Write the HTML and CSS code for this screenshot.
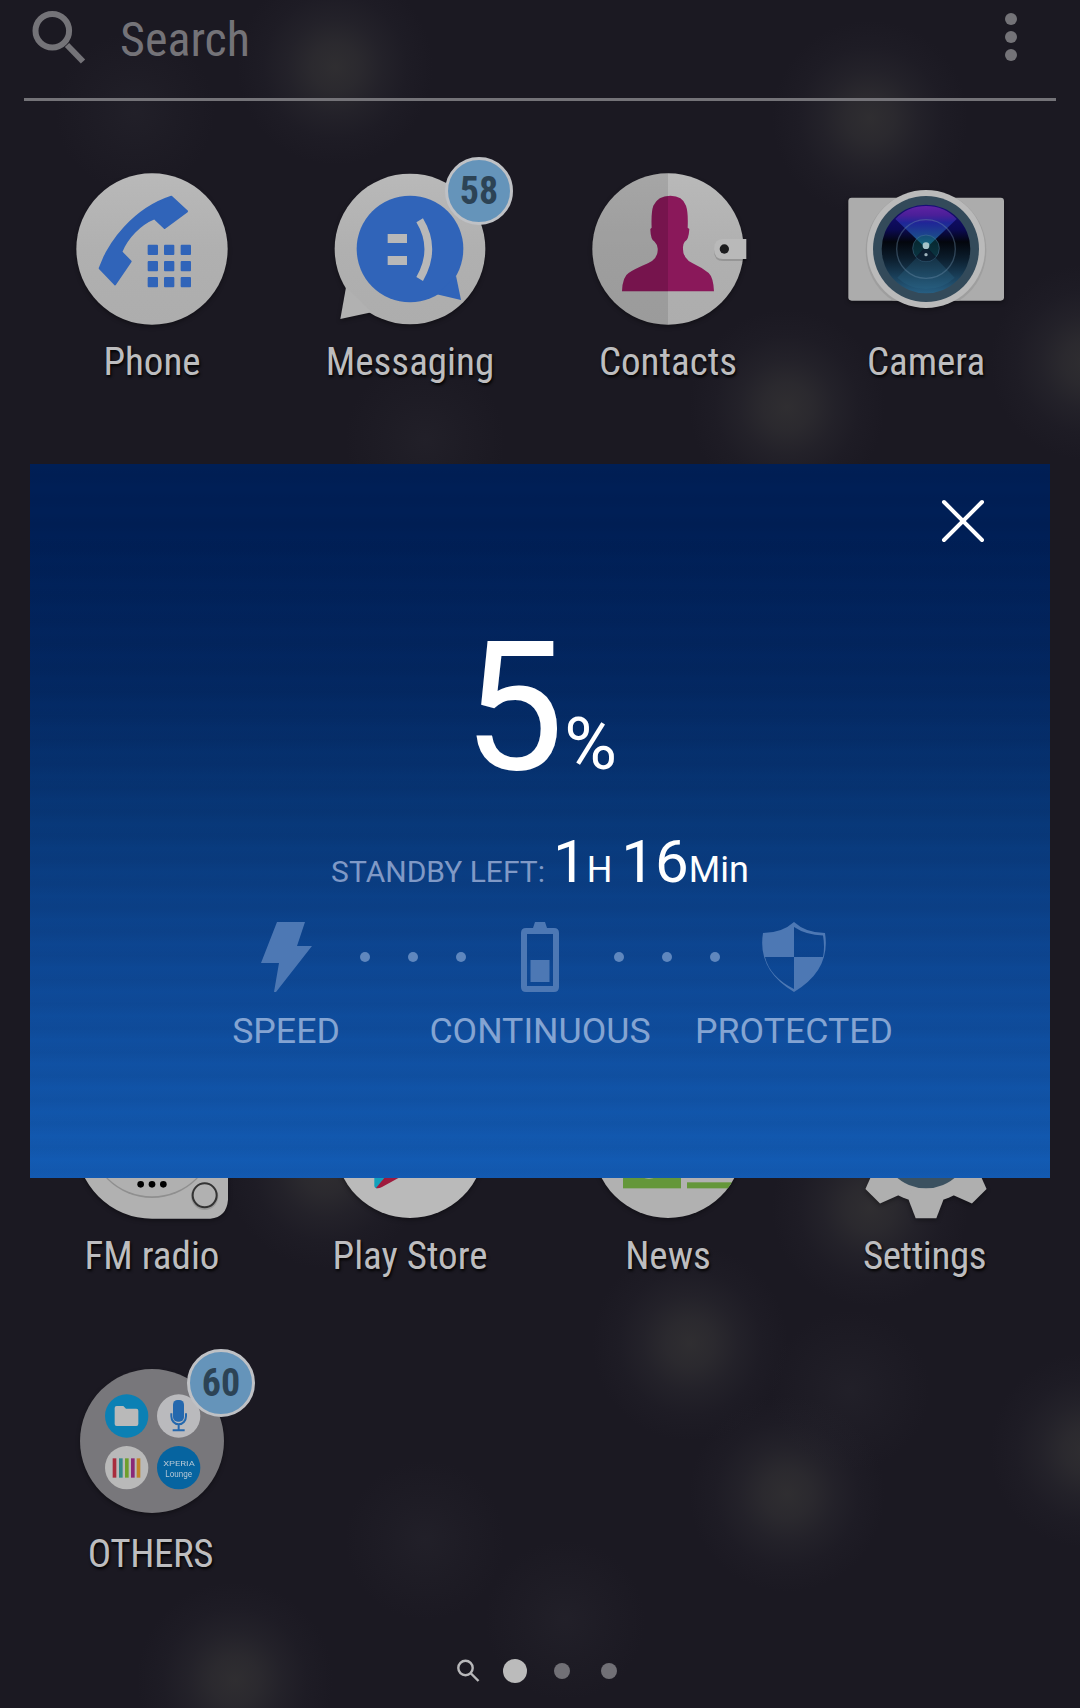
FILE: index.html
```html
<!DOCTYPE html>
<html lang="en">
<head>
    <meta charset="UTF-8">
    <meta name="viewport" content="width=device-width, initial-scale=1.0">
    <title>Home</title>
    <link rel="stylesheet" href="styles.css">
</head>
<body>

<div class="screen">
    <header class="search-bar">
        <svg class="search-icon" viewBox="0 0 60 60">
            <circle cx="22.3" cy="22.7" r="16.8"/>
            <path d="M37 37 L53 53.5"/>
        </svg>
        <span class="search-text">Search</span>
        <div class="menu"><i></i><i></i><i></i></div>
    </header>

    <main class="apps">
        <div class="app">
            <div class="icon">
                <svg viewBox="0 0 480 480">
                    <circle cx="240" cy="240" r="227" fill="url(#plate)"/>
                    <g fill="#3064b9">
                        <path d="M298 83 L345 127 L278 177 L247 148 C205 165 165 205 148 249 L176 277 L129 346 L83 298 C110 220 185 120 298 83Z" stroke="#3064b9" stroke-width="6" stroke-linejoin="round"/>
                        <rect x="227" y="227" width="31" height="31" rx="3"/><rect x="276" y="227" width="31" height="31" rx="3"/><rect x="326" y="227" width="31" height="31" rx="3"/>
                        <rect x="227" y="276" width="31" height="31" rx="3"/><rect x="276" y="276" width="31" height="31" rx="3"/><rect x="326" y="276" width="31" height="31" rx="3"/>
                        <rect x="227" y="324" width="31" height="31" rx="3"/><rect x="276" y="324" width="31" height="31" rx="3"/><rect x="326" y="324" width="31" height="31" rx="3"/>
                    </g>
                </svg>
            </div>
            <span class="label">Phone</span>
        </div>
        <div class="app">
            <div class="icon">
                <svg viewBox="0 0 480 480">
                    <circle cx="240" cy="240" r="226" fill="url(#plate)"/>
                    <path d="M48 355 L31 450 L125 430Z" fill="#b1b1b1"/>
                    <circle cx="240" cy="240" r="160" fill="#3064b9"/>
                    <path d="M378 320 L393 393 L320 376Z" fill="#3064b9"/>
                    <path d="M173 195h58v27h-58zM173 261h58v27h-58z" fill="#b8b8b8"/>
                    <path d="M269 154 Q321 240 269 330" fill="none" stroke="#b8b8b8" stroke-width="23"/>
                </svg>
                <span class="badge">58</span>
            </div>
            <span class="label">Messaging</span>
        </div>
        <div class="app">
            <div class="icon">
                <svg viewBox="0 0 480 480">
                    <circle cx="240" cy="240" r="227" fill="url(#plate)"/>
                    <path d="M240 13 A227 227 0 0 0 240 467Z" fill="#000" opacity=".1"/>
                    <path d="M102 367 Q104 322 122 312 Q140 300 180 283 Q212 268 209 238 Q208 226 200 218 Q188 214 187 180 L191 176 Q189 130 196 110 Q210 80 247 80 Q284 80 294 110 Q301 130 299 176 L304 180 Q302 214 290 218 Q284 226 285 238 Q284 268 314 283 Q340 295 362 312 Q376 325 378 367 Z" fill="#8a185a"/>
                    <path d="M102 367 Q104 322 122 312 Q140 300 180 283 Q212 268 209 238 Q208 226 200 218 Q188 214 187 180 L191 176 Q189 130 196 110 Q208 82 240 80 V367Z" fill="#000" opacity=".14"/>
                    <path d="M475 214 H405 Q378 214 378 245 Q378 276 405 276 H475Z" fill="#000" opacity=".15"/>
                    <path d="M475 210 H405 Q378 210 378 240 Q378 270 405 270 H475Z" fill="#b9b9b9"/>
                    <circle cx="409" cy="240" r="14" fill="#1c1c1e"/>
                </svg>
            </div>
            <span class="label">Contacts</span>
        </div>
        <div class="app">
            <div class="icon">
                <svg viewBox="0 0 480 480">
                    <rect x="7" y="86" width="467" height="309" rx="10" fill="#acacac"/>
                    <circle cx="240" cy="244" r="181" fill="#999" opacity=".7" clip-path="url(#cameraBody)"/>
                    <circle cx="240" cy="240" r="177" fill="#bababa"/>
                    <circle cx="240" cy="240" r="159" fill="#334a5a"/>
                    <circle cx="240" cy="240" r="133" fill="url(#lens)"/>
                    <path d="M240 236 L154 326 A125 125 0 0 0 326 326Z" fill="#2f6a8c" opacity=".28"/>
                    <path d="M240 238 L148 150 Q185 111 240 111 Q295 111 332 150Z" fill="url(#flare)"/>
                    <circle cx="240" cy="240" r="88" fill="none" stroke="#6b8ba8" stroke-opacity=".4" stroke-width="4"/>
                    <circle cx="240" cy="238" r="40" fill="#0d5560" fill-opacity=".45" stroke="#5a7fa5" stroke-opacity=".4" stroke-width="3"/>
                    <path d="M240 232 L270 264 A40 40 0 0 1 210 264Z" fill="#0a0c20" opacity=".6"/>
                    <circle cx="240" cy="230" r="10" fill="#a5c4c8"/>
                    <circle cx="240" cy="257" r="5" fill="#9fb4bc"/>
                </svg>
            </div>
            <span class="label">Camera</span>
        </div>

        <div class="app fourth-row">
            <div class="icon">
                <svg viewBox="0 0 480 480">
                    <path d="M240 13 H468 V410 Q464 462 415 467 H240 A227 227 0 0 1 240 13Z" fill="#b1b1b1"/>
                    <circle cx="240" cy="216" r="189" fill="#8f8f8f"/>
                    <circle cx="240" cy="212" r="188" fill="#b0b0b0"/>
                    <circle cx="206" cy="364" r="10"/><circle cx="240" cy="364" r="10"/><circle cx="274" cy="364" r="10"/>
                    <circle cx="398" cy="400" r="37" fill="none" stroke="#999" stroke-width="8"/>
                    <circle cx="398" cy="397" r="36" fill="#b1b1b1" stroke="#333" stroke-width="6"/>
                </svg>
            </div>
            <span class="label">FM radio</span>
        </div>
        <div class="app fourth-row">
            <div class="icon">
                <svg viewBox="0 0 480 480">
                    <circle cx="240" cy="240" r="225" fill="#bababa"/>
                    <path d="M133 110 V368 Q134 376 142 376 L250 240Z" fill="#12a0bb"/>
                    <path d="M138 375 Q146 377 156 372 L260 315 L200 300Z" fill="#9e1a3d"/>
                </svg>
            </div>
            <span class="label">Play Store</span>
        </div>
        <div class="app fourth-row">
            <div class="icon">
                <svg viewBox="0 0 480 480">
                    <circle cx="240" cy="240" r="225" fill="#b1b1b1"/>
                    <g fill="#64973a" clip-path="url(#disc)">
                        <rect x="105" y="200" width="174" height="176"/>
                        <rect x="297" y="358" width="170" height="18"/>
                    </g>
                    <circle cx="183" cy="290" r="57" fill="#b1b1b1"/>
                </svg>
            </div>
            <span class="label">News</span>
        </div>
        <div class="app fourth-row">
            <div class="icon">
                <svg viewBox="0 0 480 480">
                    <g fill="#afafaf">
                        <circle cx="240" cy="240" r="178"/>
                        <path id="tooth" d="M188 411 L209 466 H271 L292 411 L240 240Z"/>
                        <use href="#tooth" transform="rotate(45 240 240)"/>
                        <use href="#tooth" transform="rotate(90 240 240)"/>
                        <use href="#tooth" transform="rotate(135 240 240)"/>
                        <use href="#tooth" transform="rotate(180 240 240)"/>
                        <use href="#tooth" transform="rotate(225 240 240)"/>
                        <use href="#tooth" transform="rotate(270 240 240)"/>
                        <use href="#tooth" transform="rotate(315 240 240)"/>
                    </g>
                    <circle cx="240" cy="242" r="134" fill="#3b5160"/>
                </svg>
            </div>
            <span class="label tight">Settings</span>
        </div>

        <div class="app fifth-row">
            <div class="icon">
                <svg viewBox="0 0 480 480">
                    <circle cx="240" cy="240" r="216" fill="#78777b"/>
                    <!-- files -->
                    <circle cx="164" cy="165" r="65" fill="#0b80b4"/>
                    <path d="M128 141 Q128 135 134 135 H154 L162 143 H193 Q199 143 199 149 V189 Q199 195 193 195 H134 Q128 195 128 189Z" fill="#b9b9b9"/>
                    <!-- recorder -->
                    <circle cx="320" cy="165" r="65" fill="#bababd"/>
                    <rect x="303" y="117" width="33" height="65" rx="14" fill="#2468ae"/>
                    <path d="M298 157 V166 A22 24 0 0 0 342 166 V157 M320 190 V208 M302 208 H338" fill="none" stroke="#2468ae" stroke-width="6"/>
                    <!-- sketch -->
                    <circle cx="164" cy="320" r="65" fill="#b9b9b9"/>
                    <path d="M122 292h11v58h-11z" fill="#a82c3c"/>
                    <path d="M141 292h11v58h-11z" fill="#328889"/>
                    <path d="M159 292h11v58h-11z" fill="#6f9e2c"/>
                    <path d="M177 292h11v58h-11z" fill="#8a2877"/>
                    <path d="M194 292h11v58h-11z" fill="#c18328"/>
                    <!-- lounge -->
                    <circle cx="320" cy="320" r="65" fill="#0664a0"/>
                    <text x="321" y="316" class="mini" font-size="22" textLength="95" lengthAdjust="spacingAndGlyphs">XPERIA</text>
                    <text x="320" y="347" class="mini" font-size="25" textLength="80" lengthAdjust="spacingAndGlyphs">Lounge</text>
                </svg>
                <span class="badge">60</span>
            </div>
            <span class="label tight">OTHERS</span>
        </div>
    </main>

    <footer class="pages">
        <svg viewBox="0 0 24 24"><circle cx="9.5" cy="9" r="7.2"/><path d="M15 14.5 L22.5 22"/></svg>
        <i class="current"></i>
        <i></i>
        <i></i>
    </footer>

    <section class="dialog">
        <svg class="close" viewBox="0 0 44 44"><path d="M3 3 L41 41 M41 3 L3 41"/></svg>
        <div class="percent">5<small>%</small></div>
        <div class="standby">
            <span class="standby-label">STANDBY LEFT:</span>
            <span class="num">1</span><span class="unit hour">H</span>
            <span class="num">16</span><span class="unit">Min</span>
        </div>
        <div class="stages">
            <svg viewBox="0 0 64 70"><path d="M23 0 H51 L43 24 H58 L22 70 H20 L25 41 H7Z"/></svg>
            <div class="dots"><i></i><i></i><i></i></div>
            <svg viewBox="0 0 64 70"><path fill-rule="evenodd" d="M25 6 L27 0 H37 L39 6 H46 Q51 6 51 11 V65 Q51 70 46 70 H18 Q13 70 13 65 V11 Q13 6 18 6Z M19 12 V64 H45 V12Z"/><rect x="22.500" y="38" width="19" height="22"/></svg>
            <div class="dots"><i></i><i></i><i></i></div>
            <svg viewBox="0 0 64 70"><path fill-rule="evenodd" d="M32 0 Q44 11 63 11 Q69 48 32 70 Q-5 48 1 11 Q20 11 32 0Z M32 5 V35 H61 Q63 25 61 13.500 Q44 13 32 5Z M32 35 H3 Q8 55 32 67Z"/></svg>
        </div>
        <div class="stage-names">
            <span>SPEED</span>
            <span>CONTINUOUS</span>
            <span>PROTECTED</span>
        </div>
    </section>
</div>

<svg class="defs">
    <defs>
        <linearGradient id="plate" x1="0" y1="0" x2="0" y2="1">
            <stop offset="0" stop-color="#b9b9b9"/>
            <stop offset=".5" stop-color="#b0b0b0"/>
            <stop offset="1" stop-color="#adadad"/>
        </linearGradient>
        <linearGradient id="lens" x1="0" y1="0" x2="0" y2="1">
            <stop offset="0" stop-color="#170f78"/>
            <stop offset=".28" stop-color="#0b0a52"/>
            <stop offset=".42" stop-color="#03060d"/>
            <stop offset=".6" stop-color="#0b1c2b"/>
            <stop offset="1" stop-color="#275f83"/>
        </linearGradient>
        <linearGradient id="flare" x1="0" y1="0" x2="0" y2="1">
            <stop offset="0" stop-color="#6023a4"/>
            <stop offset=".22" stop-color="#4a1f98"/>
            <stop offset=".4" stop-color="#1f2697"/>
            <stop offset=".7" stop-color="#1c478c"/>
            <stop offset="1" stop-color="#1a8390"/>
        </linearGradient>
        <clipPath id="cameraBody"><rect x="7" y="86" width="467" height="309" rx="10"/></clipPath>
        <clipPath id="disc"><circle cx="240" cy="240" r="225"/></clipPath>
    </defs>
</svg>

</body>
</html>
```
FILE: styles.css
```css
body {
    margin: 0;
    background-color: #1b1922;
    font-family: Roboto, sans-serif;
}

.screen {
    --glow: rgba(62, 61, 60, 0.58) 0, rgba(60, 59, 60, 0.48) 24px, rgba(56, 55, 60, 0.28) 48px, rgba(54, 53, 62, 0.1) 72px, transparent 98px;
    --faint: rgba(56, 55, 64, 0.22) 0, rgba(56, 55, 64, 0.1) 40px, transparent 80px;
    position: relative;
    display: flex;
    flex-direction: column;
    width: 1080px;
    height: 1708px;
    overflow: hidden;
    background:
        radial-gradient(circle at 335px 67px, var(--glow)),
        radial-gradient(circle at 870px 118px, var(--glow)),
        radial-gradient(circle at 787px 407px, var(--glow)),
        radial-gradient(circle at 1088px 362px, var(--glow)),
        radial-gradient(circle at 690px 1343px, var(--glow)),
        radial-gradient(circle at 787px 1494px, var(--glow)),
        radial-gradient(circle at 1088px 1450px, var(--glow)),
        radial-gradient(circle at 235px 1680px, var(--glow)),
        radial-gradient(circle at 870px 1208px, var(--glow)),
        radial-gradient(circle at 325px 1170px, var(--glow)),
        radial-gradient(circle at 135px 112px, var(--faint)),
        radial-gradient(circle at 425px 1540px, var(--faint)),
        radial-gradient(circle at 425px 440px, var(--faint)),
        radial-gradient(circle at 850px 1390px, var(--faint)),
        radial-gradient(circle at 565px 1620px, var(--faint)),
        #1b1922;
}

.search-bar {
    box-sizing: border-box;
    display: flex;
    align-items: flex-start;
    height: 101px;
    margin: 0 24px;
    padding: 8px 39px 0 6px;
    border-bottom: 3px solid #747378;
}

.search-icon {
    width: 60px;
    height: 60px;
    fill: none;
    stroke: #747378;
    stroke-width: 6;
}

.search-text {
    flex: 1;
    margin-left: 30px;
    padding-top: 4px;
    font-size: 48px;
    line-height: 56px;
    font-family: "Roboto Condensed", Roboto, sans-serif;
    font-stretch: 75%;
    color: #747378;
}

.menu {
    display: flex;
    flex-direction: column;
    gap: 6px;
    padding-top: 5px;
}

.menu i {
    width: 12px;
    height: 12px;
    border-radius: 50%;
    background: #747378;
}

.apps {
    flex: none;
    display: grid;
    grid-template-columns: repeat(4, 258px);
    grid-template-rows: repeat(5, 298px);
    margin-left: 23px;
}

.app {
    display: flex;
    flex-direction: column;
    align-items: center;
    padding-top: 67.5px;
}

.fourth-row {
    grid-row: 4;
}

.fifth-row {
    grid-row: 5;
}

.icon {
    position: relative;
    width: 160px;
    height: 160px;
}

.icon svg {
    display: block;
    width: 160px;
    height: 160px;
    filter: drop-shadow(0 2px 2px rgba(0, 0, 0, 0.35));
}

.label {
    margin-top: 10px;
    font-family: "Roboto Condensed", Roboto, sans-serif;
    font-stretch: 75%;
    font-size: 39px;
    line-height: 46px;
    white-space: nowrap;
    color: #bdbdbf;
    text-shadow: 1px 2px 3px #000;
}

.tight {
    letter-spacing: -0.4px;
    margin-left: -3px;
}

.badge {
    box-sizing: border-box;
    position: absolute;
    left: 115px;
    top: -12px;
    width: 68px;
    height: 68px;
    border: 3px solid #bfc1c5;
    border-radius: 50%;
    background: #6594ba;
    font-family: "Roboto Condensed", Roboto, sans-serif;
    font-stretch: 75%;
    font-size: 38px;
    font-weight: bold;
    line-height: 62px;
    text-align: center;
    color: #2c4355;
}

.mini {
    fill: #b4c6d4;
    text-anchor: middle;
}

.pages {
    display: flex;
    align-items: center;
    justify-content: center;
    height: 24px;
    margin-top: 68px;
    padding-right: 8px;
}

.pages svg {
    width: 24px;
    height: 24px;
    margin-right: 23px;
    fill: none;
    stroke: #b8b8ba;
    stroke-width: 2.4;
}

.pages i {
    width: 16px;
    height: 16px;
    margin-left: 31px;
    border-radius: 50%;
    background: #717076;
}

.pages .current {
    width: 24px;
    height: 24px;
    margin: 0 -4px 0 0;
    background: #bbbbbb;
}

.dialog {
    position: absolute;
    left: 30px;
    top: 464px;
    display: flex;
    flex-direction: column;
    align-items: center;
    width: 1020px;
    height: 714px;
    background:
        repeating-linear-gradient(rgba(0, 0, 20, 0) 0, rgba(0, 0, 20, 0.04) 12px, rgba(0, 0, 20, 0) 24px),
        linear-gradient(#001f56 0, #001f56 10%, #032761 30%, #083879 50%, #0d4794 70%, #135cb5 100%);
    color: #fff;
}

.close {
    align-self: flex-end;
    width: 44px;
    height: 44px;
    margin: 35px 65px 0 0;
    fill: none;
    stroke: #fff;
    stroke-width: 4;
    stroke-linecap: round;
}

.percent {
    margin-top: 60px;
    font-size: 180px;
    line-height: 210px;
}

.percent small {
    font-size: 72px;
}

.standby {
    display: flex;
    align-items: baseline;
    margin-top: -23px;
    line-height: 70px;
}

.standby-label {
    margin-right: 8px;
    font-size: 30px;
    color: #8099c6;
}

.num {
    font-size: 60px;
}

.unit {
    font-size: 36px;
}

.hour {
    margin-right: 9px;
}

.stages {
    display: flex;
    margin-top: 15px;
}

.stages svg {
    width: 64px;
    height: 70px;
    fill: #4d78b4;
}

.dots {
    display: flex;
    align-items: center;
    justify-content: center;
    gap: 38px;
    width: 190px;
}

.dots i {
    width: 10px;
    height: 10px;
    border-radius: 50%;
    background: #5f87be;
}

.stage-names {
    display: grid;
    grid-template-columns: repeat(3, 254px);
    margin-top: 18px;
    font-size: 35.7px;
    line-height: 42px;
    text-align: center;
    color: #84a4d2;
}

.defs {
    position: absolute;
    width: 0;
    height: 0;
}
```
